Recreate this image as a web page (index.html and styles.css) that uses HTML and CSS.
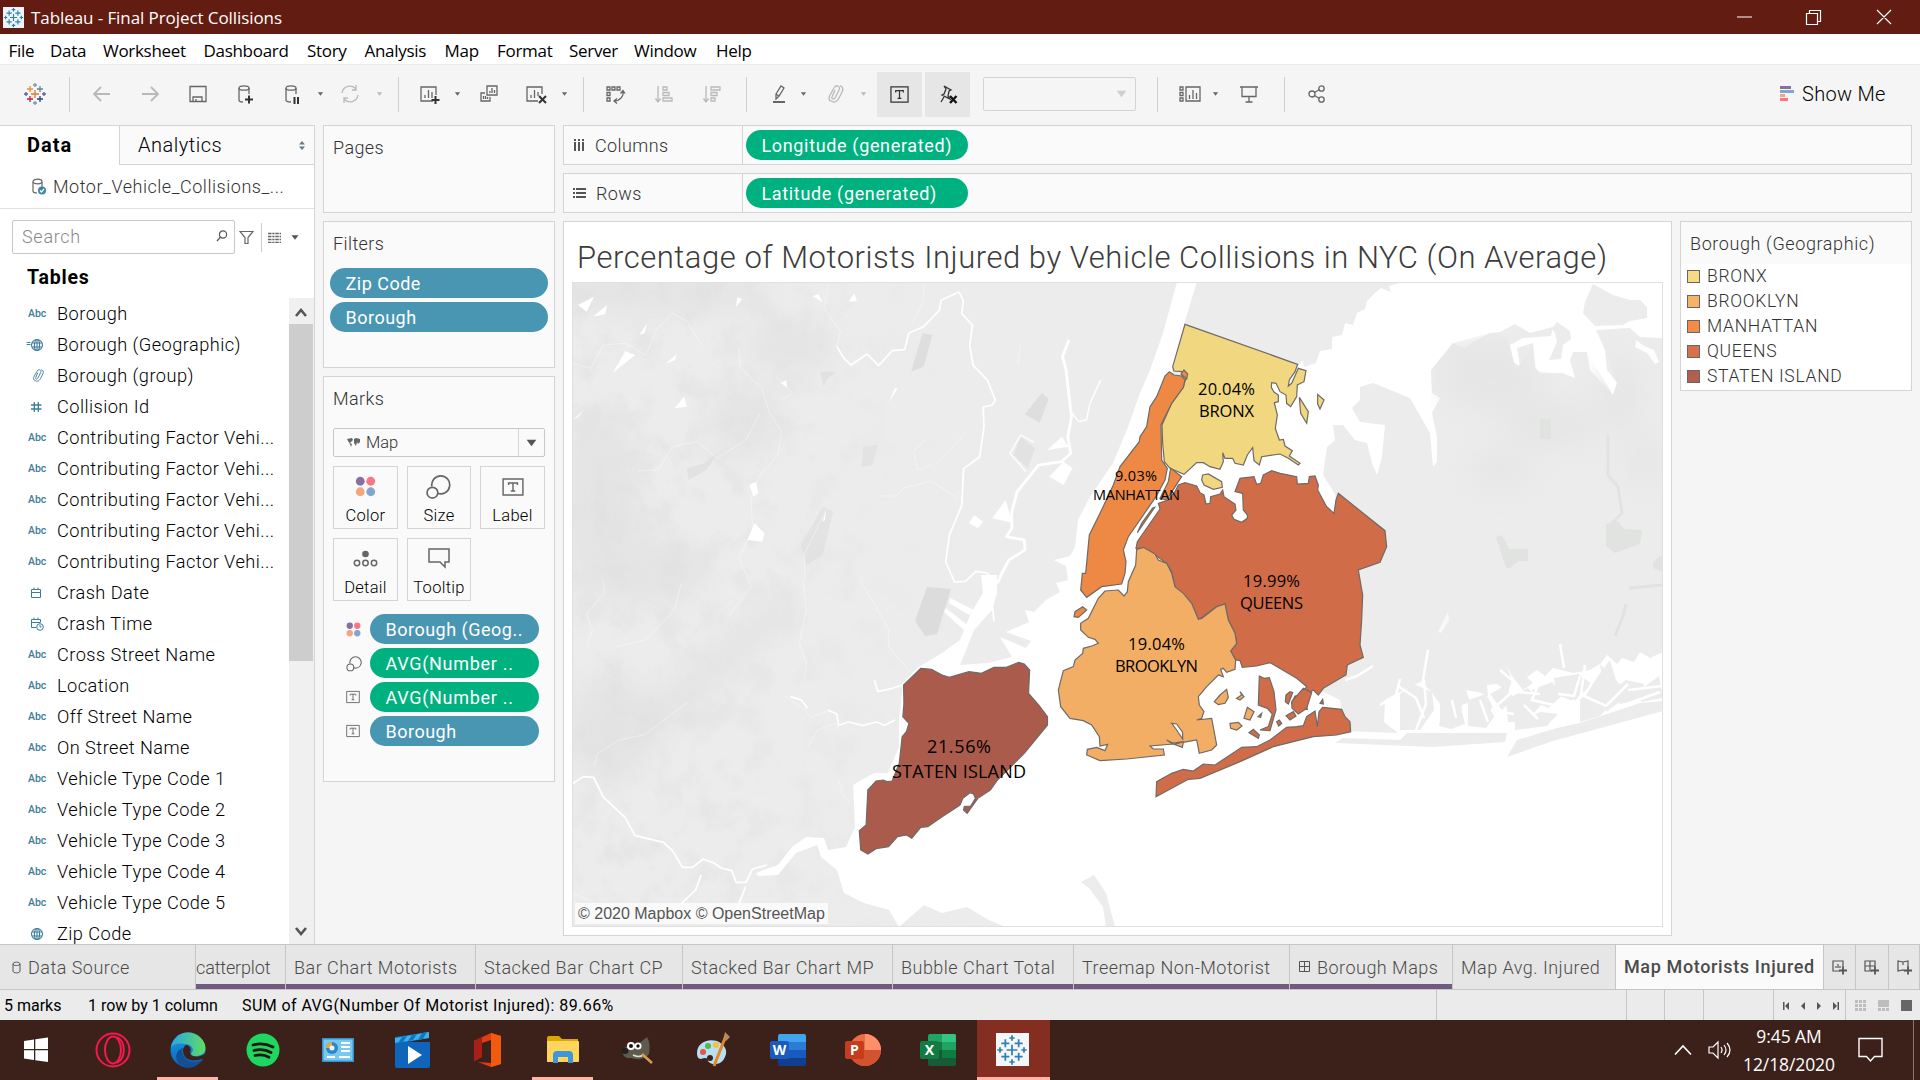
FILE: index.html
```html
<!DOCTYPE html>
<html lang="en">
<head>
<meta charset="utf-8">
<title>Tableau - Final Project Collisions</title>
<link rel="stylesheet" href="styles.css">
</head>
<body>
<svg class="defs" width="0" height="0" aria-hidden="true">
  <defs>
    <symbol id="tableau" viewBox="0 0 24 24"><g fill="none" stroke-width="1.3">
      <path class="t1" d="M12 8v8M8 12h8"/><path class="t2" d="M7 4v6M4 7h6"/><path class="t3" d="M17 4v6M14 7h6"/><path class="t4" d="M7 14v6M4 17h6"/><path class="t5" d="M17 14v6M14 17h6"/><path class="t6" d="M12 1v4M10 3h4M12 19v4M10 21h4"/><path class="t7" d="M3 10v4M1 12h4M21 10v4M19 12h4"/></g></symbol>
    <symbol id="caret" viewBox="0 0 8 6"><path d="M1 1h6L4 5z" fill="currentColor"/></symbol>
    <symbol id="clip" viewBox="0 0 24 24"><path d="M7 19c-3-1-2-4-1-6l4-7c2-4 7-2 5 2l-4 8c-1 2-4 1-3-1l3-7M7 19c3 2 6 1 8-3l3-6c2-4 0-6-2-6" fill="none" stroke="currentColor" stroke-width="1.3"/></symbol>
    <symbol id="tbox" viewBox="0 0 20 20"><path d="M1 2h18v16H1zM6 8V6h8v2M10 6v8M8 14h4" fill="none" stroke="currentColor" stroke-width="1.3"/></symbol>
    <symbol id="bubbles" viewBox="0 0 24 24"><g fill="none" stroke="currentColor" stroke-width="1.5"><path d="M7 12A8 8 0 1 1 12 18"/><circle cx="7.5" cy="17.500" r="4.800"/></g></symbol>
    <symbol id="dots" viewBox="0 0 20 20"><circle cx="5" cy="5" r="4.200" fill="#87709d"/><circle cx="15" cy="5" r="4.200" fill="#fb7582"/><circle cx="5" cy="15" r="4.200" fill="#f3a67e"/><circle cx="15" cy="15" r="4.200" fill="#81a5cf"/></symbol>
    <symbol id="globe" viewBox="0 0 14 14"><g fill="none" stroke="currentColor" stroke-width="1.100"><circle cx="7" cy="7" r="5.500"/><ellipse cx="7" cy="7" rx="2.600" ry="5.500"/><path d="M2 5h10M2 9h10M7 1.500v11"/></g></symbol>
  </defs>
</svg>
<div class="app">
  <header class="titlebar">
    <span class="appicon"><svg width="21" height="21"><use href="#tableau"/></svg></span>
    <span class="wintitle">Tableau - Final Project Collisions</span>
    <svg class="winctl" width="160" height="20" viewBox="0 0 160 20" fill="none" stroke="#fff" stroke-width="1.200"><path d="M1 10h15M70.500 6.500h11v11h-11zM73.500 6V3.500h11v11H82M141 3l14 14M155 3l-14 14"/></svg>
  </header>
  <nav class="menubar"><span>File</span><span>Data</span><span>Worksheet</span><span>Dashboard</span><span>Story</span><span>Analysis</span><span>Map</span><span>Format</span><span>Server</span><span>Window</span><span>Help</span></nav>

  <div class="toolbar">
    <svg class="ic color"><use href="#tableau"/></svg><i class="sep"></i>
    <svg class="ic dim" viewBox="0 0 24 24"><path d="M20 12H4M11 5l-7 7 7 7" stroke-width="1.800"/></svg>
    <svg class="ic dim" viewBox="0 0 24 24"><path d="M4 12h16M13 5l7 7-7 7" stroke-width="1.800"/></svg>
    <svg class="ic" viewBox="0 0 24 24"><path d="M4 4.500h16v15H4zM7 19v-4h9v4M10 19v-2"/></svg>
    <svg class="ic" viewBox="0 0 24 24"><ellipse cx="10" cy="6" rx="5" ry="2.200"/><path d="M5 6v12c0 1.500 2 2 4 2M15 6v6"/><path d="M11 17.500h8M15 13.500v8" stroke="#333" stroke-width="2"/></svg>
    <svg class="ic" viewBox="0 0 24 24"><ellipse cx="11" cy="6" rx="5" ry="2.200"/><path d="M6 6v12c0 1.500 2 2 5 2M16 6v6"/><path d="M14.500 15v7M18 15v7" stroke="#333" stroke-width="2"/></svg>
    <svg class="car"><use href="#caret"/></svg>
    <svg class="ic dim" viewBox="0 0 24 24"><path d="M4 11a8 8 0 0 1 14-4M20 13a8 8 0 0 1-14 4M18 3v5h-4M6 21v-5h4"/></svg>
    <svg class="car dim"><use href="#caret"/></svg><i class="sep"></i>
    <svg class="ic" viewBox="0 0 24 24"><path d="M16 19H4V5h15v8M8 16v-3M11.500 16V8M15 16v-6"/><path d="M14.500 18h8M18.500 14v8" stroke="#333" stroke-width="2"/></svg>
    <svg class="car"><use href="#caret"/></svg>
    <svg class="ic" viewBox="0 0 24 24"><path d="M10 4h10v9H10zM13 11V9M15 11V6M17.500 11V8M8 11H4v8h9v-4M6.500 17v-3M8.500 17v-3M10.500 17v-2"/></svg>
    <svg class="ic" viewBox="0 0 24 24"><path d="M14 19H3V5h15v7M7 16v-3M10.500 16V8M14 14v-4"/><path d="M15 14l7 7M22 14l-7 7" stroke="#333" stroke-width="2"/></svg>
    <svg class="car"><use href="#caret"/></svg><i class="sep"></i>
    <svg class="ic" viewBox="0 0 24 24"><path d="M4 5h3v3H4zM9 5h3v3H9zM14 5h3v3h-3zM4 10.500h3v3H4zM4 16h3v3H4zM20 9c1 5-3 10-9 10M17.500 11.500l2.500-3 2 3M14 16.500L11 19l3 2.500"/></svg>
    <svg class="ic dim" viewBox="0 0 24 24"><path d="M6 4v15M3.500 16.500L6 20l2.500-3.500M11 5h4v3h-4zM11 10.500h6v3h-6zM11 16h9v3h-9z"/></svg>
    <svg class="ic dim" viewBox="0 0 24 24"><path d="M6 4v15M3.500 16.500L6 20l2.500-3.500M11 5h9v3h-9zM11 10.500h6v3h-6zM11 16h4v3h-4z"/></svg><i class="sep"></i>
    <svg class="ic" viewBox="0 0 24 24"><path d="M9 12l5-8 3 2-5 8-3 3zM9 12l3 2"/><path d="M6 20h12" stroke-width="2"/></svg>
    <svg class="car"><use href="#caret"/></svg>
    <svg class="ic dim"><use href="#clip"/></svg>
    <svg class="car dim"><use href="#caret"/></svg>
    <span class="tog"><svg width="19" height="19"><use href="#tbox"/></svg></span>
    <span class="tog"><svg class="ic" viewBox="0 0 24 24"><path d="M8 4l7 4-2 1-1 5 2 3-8-4 2-1 2-5zM8 15l-3 5"/><path d="M14 14l6.500 7M20.500 14L14 21" stroke="#111" stroke-width="2.300"/></svg></span>
    <span class="combo"><svg width="13" height="10" viewBox="0 0 8 6"><use href="#caret"/></svg></span><i class="sep"></i>
    <svg class="ic" viewBox="0 0 24 24"><path d="M2 5h3v3H2zM2 10.500h3v3H2zM2 16h3v3H2zM8 5h14v14H8zM11.500 17v-4M15 17V8M18.500 17v-6"/></svg>
    <svg class="car"><use href="#caret"/></svg>
    <svg class="ic" viewBox="0 0 24 24"><path d="M3 5h18M5 5v9.500h14V5M12 15v5M8.500 20h7"/></svg><i class="sep"></i>
    <svg class="ic" viewBox="0 0 24 24"><circle cx="7" cy="12" r="3"/><circle cx="16.500" cy="6.500" r="2.700"/><circle cx="16.500" cy="17.500" r="2.700"/><path d="M9.500 10.500l5-3M9.500 13.500l5 3"/></svg>
    <span class="showme"><svg width="15" height="16"><path d="M0 0h11v3H0z" fill="#87709d"/><path d="M0 4h14v3H0z" fill="#81a5cf"/><path d="M0 8h5v3H0z" fill="#f3a67e"/><path d="M0 12h8v3H0z" fill="#fb7582"/></svg><b>Show Me</b></span>
  </div>

  <main class="work">
    <aside class="side">
      <div class="tabs2"><span class="on">Data</span><span class="off">Analytics<svg width="6" height="9"><path d="M0 3.500L3 0l3 3.500zM0 5.500L3 9l3-3.500z" fill="#687a85"/></svg></span></div>
      <div class="source"><svg width="16" height="18" viewBox="0 0 16 18" fill="none" stroke="#666" stroke-width="1.200"><ellipse cx="6.500" cy="3.500" rx="4.500" ry="2.300"/><path d="M2 4v9c0 2 2 2 4 2M11 4v5"/><circle cx="11" cy="12.500" r="4" fill="#3d87a3" stroke="none"/><path d="M9 12.500l1.500 1.500 2.500-3" stroke="#fff"/></svg><span>Motor_Vehicle_Collisions_...</span></div>
      <div class="find">
        <div class="searchbox"><span>Search</span><svg width="12" height="12" fill="none" stroke="#555" stroke-width="1.200"><circle cx="7" cy="4.500" r="3.600"/><path d="M4.500 7L1 11"/></svg></div>
        <svg class="funnel" width="15" height="15" fill="none" stroke="#666" stroke-width="1.200"><path d="M1 1.500h13L9 7.500v6H6v-6z"/></svg>
        <svg class="view" width="13" height="11" stroke="#666" stroke-width="1.300"><path d="M0 1.500h13M0 4.500h13M0 7.500h13M0 10.300h13" stroke-dasharray="3.500 .8 2.200 .8"/></svg>
        <svg width="10" height="7" viewBox="0 0 8 6" color="#555"><use href="#caret"/></svg>
      </div>
      <h2>Tables</h2>
      <div class="listwrap">
        <ul class="fields">
          <li><em>Abc</em>Borough</li>
          <li><em class="g"><small>=</small><svg width="14" height="14"><use href="#globe"/></svg></em>Borough (Geographic)</li>
          <li><em><svg width="17" height="17"><use href="#clip"/></svg></em>Borough (group)</li>
          <li><em><svg width="12" height="12" stroke="currentColor" stroke-width="1.300"><path d="M4.300 1v10M8.300 1v10M1 4h10.500M1 8h10.500"/></svg></em>Collision Id</li>
          <li><em>Abc</em>Contributing Factor Vehi...</li>
          <li><em>Abc</em>Contributing Factor Vehi...</li>
          <li><em>Abc</em>Contributing Factor Vehi...</li>
          <li><em>Abc</em>Contributing Factor Vehi...</li>
          <li><em>Abc</em>Contributing Factor Vehi...</li>
          <li><em><svg width="12" height="12" fill="none" stroke="currentColor"><path d="M1.500 2.500h9v8h-9zM1.500 5.500h9M4 .5v2M8 .5v2"/></svg></em>Crash Date</li>
          <li><em><svg width="14" height="14" fill="none" stroke="currentColor"><path d="M6 10.500H1.500v-8h9V5M1.500 5.500h9M4 .5v2M8 .5v2"/><circle cx="10" cy="10" r="3.300"/><path d="M10 8v2h1.500"/></svg></em>Crash Time</li>
          <li><em>Abc</em>Cross Street Name</li>
          <li><em>Abc</em>Location</li>
          <li><em>Abc</em>Off Street Name</li>
          <li><em>Abc</em>On Street Name</li>
          <li><em>Abc</em>Vehicle Type Code 1</li>
          <li><em>Abc</em>Vehicle Type Code 2</li>
          <li><em>Abc</em>Vehicle Type Code 3</li>
          <li><em>Abc</em>Vehicle Type Code 4</li>
          <li><em>Abc</em>Vehicle Type Code 5</li>
          <li><em><svg width="14" height="14"><use href="#globe"/></svg></em>Zip Code</li>
        </ul>
        <div class="scroll"><svg width="12" height="26" fill="none" stroke="#555" stroke-width="2.600"><path d="M1 18l5-6 5 6"/></svg><div class="thumb"></div><svg width="12" height="26" fill="none" stroke="#555" stroke-width="2.600"><path d="M1 10l5 6 5-6"/></svg></div>
      </div>
    </aside>

    <section class="cards">
      <div class="card pages"><h3>Pages</h3></div>
      <div class="card filters"><h3>Filters</h3><div class="pill blue">Zip Code</div><div class="pill blue">Borough</div></div>
      <div class="card marks"><h3>Marks</h3>
        <div class="marktype"><svg width="13" height="10"><path d="M0 1l5-1 1 2-2 2-1 1 2 1-1 3-1-3-2-3zM7 1l2-1 4 1v3l-2 2-1-2-1 4-2-3z" fill="#666"/></svg><span>Map</span><i><svg width="13" height="10" viewBox="0 0 8 6"><use href="#caret"/></svg></i></div>
        <div class="btns">
          <span><svg width="21" height="21"><use href="#dots"/></svg>Color</span>
          <span><svg class="big" width="27" height="27"><use href="#bubbles"/></svg>Size</span>
          <span><svg width="22" height="20" viewBox="0 0 20 20" preserveAspectRatio="none"><use href="#tbox"/></svg>Label</span>
          <span><svg width="25" height="20" fill="none" stroke="#666" stroke-width="1.500"><circle cx="12.500" cy="5" r="3.300" fill="#666" stroke="none"/><circle cx="4" cy="14" r="2.700"/><circle cx="12.500" cy="14" r="2.700"/><circle cx="21" cy="14" r="2.700"/></svg>Detail</span>
          <span><svg width="22" height="21" fill="none" stroke="#666" stroke-width="1.500"><path d="M1 1h20v13h-4v5l-5-5H1z"/></svg>Tooltip</span>
        </div>
        <div class="markrow"><svg width="15" height="15"><use href="#dots"/></svg><div class="pill blue tight">Borough (Geog..</div></div>
        <div class="markrow"><svg width="17" height="17"><use href="#bubbles"/></svg><div class="pill green wide">AVG(Number ..</div></div>
        <div class="markrow"><svg width="14" height="14"><use href="#tbox"/></svg><div class="pill green wide">AVG(Number ..</div></div>
        <div class="markrow"><svg width="14" height="14"><use href="#tbox"/></svg><div class="pill blue">Borough</div></div>
      </div>
    </section>

    <section class="canvas">
      <div class="shelf"><div class="lab"><svg width="12" height="13" stroke="#555" stroke-width="2"><path d="M2 0v2M2 3v9M6 0v2M6 3v9M10 0v2M10 3v9"/></svg>Columns</div><div class="pill green">Longitude (generated)</div></div>
      <div class="shelf"><div class="lab"><svg width="13" height="12" stroke="#555" stroke-width="2"><path d="M0 2h2M3 2h10M0 6h2M3 6h10M0 10h2M3 10h10"/></svg>Rows</div><div class="pill green">Latitude (generated)</div></div>
      <div class="lower">
        <div class="sheet">
          <h1>Percentage of Motorists Injured by Vehicle Collisions in NYC (On Average)</h1>
          <div class="mapbox">
          <svg class="map" viewBox="572 282 1091 645" width="1091" height="645">
            <defs>
              <filter id="mottle" x="0" y="0" width="1" height="1" color-interpolation-filters="sRGB"><feTurbulence type="fractalNoise" baseFrequency=".035 .03" numOctaves="4" seed="8"/><feColorMatrix values="0 0 0 0 .87  0 0 0 0 .87  0 0 0 0 .87  4 0 0 0 -1.900"/></filter>
              <filter id="soft" x="-.3" y="-.3" width="1.600" height="1.600" color-interpolation-filters="sRGB"><feGaussianBlur stdDeviation="14"/></filter>
              <linearGradient id="fadeR"><stop offset=".3" stop-color="#fff"/><stop offset=".8" stop-color="#000"/></linearGradient>
              <mask id="west"><rect x="572" y="282" width="500" height="645" fill="url(#fadeR)"/></mask>
              <clipPath id="li"><path d="M1431 370L1453 343 1490 333 1508 338 1516 370 1533 345 1536 370 1575 378 1587 352 1613 395 1617 383 1605 350 1600 335 1663 338V540H1431z"/></clipPath>
            </defs>
            <rect x="572" y="282" width="1091" height="645" fill="#ececec"/>
            <g fill="#e2e2e2" filter="url(#soft)" opacity=".8"><ellipse cx="650" cy="292" rx="120" ry="22"/><ellipse cx="600" cy="500" rx="40" ry="90"/><ellipse cx="640" cy="570" rx="70" ry="35"/><ellipse cx="790" cy="345" rx="45" ry="25"/><ellipse cx="745" cy="420" rx="35" ry="35"/><ellipse cx="610" cy="730" rx="45" ry="55"/><path d="M600 740L780 590 800 610 640 760z"/></g>
            <rect x="572" y="282" width="500" height="645" filter="url(#mottle)" mask="url(#west)" opacity=".36"/>
            <g transform="translate(560 220) scale(.35714 .33333)" fill="#dedede">
              <path d="M1350 518l18 20-25 70-42-25zM1015 340l28 5-25 95-35 15z"/><path d="M735 860l30 15-30 130-45 30-15-60z" opacity=".6"/><path d="M728 455h47l-25 20-12 25zM355 745l50-15 35-30-30 50-50 30zM1290 650l40 35-20 60-40-40z" opacity=".7"/><path d="M850 680l40-5-15 60-30 5z" opacity=".6"/>
            </g>
            <path d="M927 587l24 2-14 45-12 2-10-15z" fill="#dcdcdc"/>
            <g transform="translate(560 220) scale(.35714 .33333)" fill="#fff">
              <path d="M50 255l45-25-20 45zM92 290l40-35-5 28zM222 345l22-35-8 30zM148 458l35-65 28 12zM295 432l32-30-5 18zM320 565l28-35 8 30zM36 600l30-30-15 20zM492 262l5-30 13 5zM708 228l28 20-12-25zM808 245l16-25 7 23zM618 490l15-10 3 22zM920 548l18-45 7 3zM530 795l18-10 8 35-14 10zM525 960l20-50 28 30-6 25zM735 905l10-35-3 30zM1210 895l38-55 18 68zM1145 910l15-25 25 20-15 20zM1370 770l40-45 25 20-25 50zM1365 690l40-40 20 30z"/>
              <g fill="none" stroke="#fff" stroke-linejoin="round">
                <path stroke-width="5" d="M775 380l20 35 20 20 45-33 32 35 38-45 35-3 12-50 40-18 45-50 5-30 50-25 12 25-4 40 30 35-8 60 10 60 40 45 22 60-10 15-24 5 2 60-12 90-45 35-5 110-35 90-10 80 25 60 30-2 30-30 30 5 25 25-10 60 5 60"/>
                <path stroke-width="8" d="M1425 360l-18 50 10 40 15 140-10 60 8 50-25 25-65 10-60 80-15 60 0 50-15 25 50 10 2 30-45 30-20 40-10 25-20 18-22 20"/>
                <path stroke-width="4" d="M1430 575l22 30 22-5 10-50 30-70M1305 755l-45-55 30-55 38 22"/>
                <path stroke-width="1.500" opacity=".75" d="M36 430l50 15 35-70 60-5 60 35 30-80 45-45 40 25 40 70M750 190l-10 75 45 70-10 45M1020 190l-5 60-30 60M500 385l5 60 60 60 20 70 35 60-10 70-50 60-25 70 5 100-40 75 35 90-60 85M560 580l-40 80-80 55-55-50-70 15-40 70-58 3M620 540l30-20-45-50M895 828h45l25-25 75-20 70 50M1040 735l-38 15-12-55 30-35M1055 730l80-90M1290 375l-8 60M685 1080v-80l60-130"/>
              </g>
            </g>
            <g transform="translate(560 580) scale(.35714 .33333)" fill="none" stroke="#fff" stroke-linejoin="round">
              <path stroke-width="5" d="M36 610l30-20 28 2 28 60 60 60 28 55 80 20 25 25 28 50 28 0 30-25 30 12 20 15 30 8 12 35 28 0 18-40 40-12"/>
              <path stroke-width="5" d="M645 350l30 10 18 25M750 390l25 12 5 34 28-10 40 10 40-10 20 10 30-16M880 300l10 35 40-10 30-10M395 885l-15 45-40 40M520 920l-30 80"/>
              <path stroke-width="1.500" opacity=".75" d="M95 560l10-40 60-40 70-15 125-100M120 0l5 40-50 60 15 50-15 50M340 10l-20 80-80 90-80 20M680 0l10 90-20 100 20 60-5 50M840 0l50 90 30 60v50l60 75M695 500l25-50 50-20 10 20M630 348l60 45 10 20 50-20M780 600l10 40 30 40M0 925l90 40 30 40"/>
            </g>
            <g fill="#fff">
              <path d="M1177 282L1172 300 1163 333 1150 370 1140 393 1128 427 1113 463 1090 497 1078 520 1075 547 1070 556 1054 560 1066 566 1068 580 1056 583 1060 592 1046 600 1034 612 1025 610 1029 622 1006 632 1031 641 1026 648 1000 637 1012 657 988 663 960 665 974 630 992 610 997 593V575H981L983 593 971 613 960 640 942 653 917 668 903 683 899 720V747L888 773H874L853 785 855 827 846 847 828 850 824 838 806 837 792 847 778 865 756 873 758 876 778 875 796 853 817 845 821 857 837 870 844 893 864 903 889 910 899 927 924 905 942 913 967 907 989 920 1006 927H1663V282H1400L1363 292 1355 308 1342 320 1325 335 1313 350 1298 365 1173 400 1172 370 1184 325 1197 282z"/>
              <path d="M950 598l24 12-5 5-20-12M944 612l22 20 0-8-20-16"/>
            </g>
            <g fill="#ececec">
              <path d="M1173 369L1184 325 1197 282H1400L1363 292 1355 308 1342 320 1325 335 1313 350 1298 365z"/>
              <path d="M1363 282l40 0-14 4 2 6-10-4-6 5-8 8-2 8-8 4-4 12-8-2-3 12-10 2v12l-12 2-4 12-12 4-6-40 40-20z"/>
              <path d="M1335 494L1323 475 1327 447 1335 440 1333 425 1343 425 1355 440 1367 443 1372 463 1377 475 1382 457 1385 425 1360 422 1352 408 1360 400V387L1373 383 1410 398 1430 433 1433 467 1437 462V437L1432 413 1440 398 1432 393 1431 370 1453 343 1465 348 1473 342 1490 333 1500 332 1515 324 1530 333 1553 327 1551 336 1523 338 1510 345 1513 362 1520 366 1517 348 1533 343 1535 367 1540 373 1562 373 1575 378 1570 360 1573 352H1587L1590 370 1613 395 1617 383 1607 370 1605 350 1596 330 1630 328 1640 337 1663 338V652L1650 658 1640 652 1634 662 1622 658 1617 664 1607 655 1600 664 1590 670 1573 673 1553 668 1545 676 1537 670 1527 677 1533 683 1523 690 1512 676 1506 664 1512 680 1508 692 1497 684 1487 685 1488 696 1478 692 1466 690 1470 702 1462 705 1460 722 1440 722 1440 704 1430 690 1420 682 1400 692 1385 700 1384 722 1398 733 1345 731 1340 700 1320 690 1346 666 1360 660z"/>
              <path d="M1552 328l5-6 13 9 1 8-8 6-2 14-12 1 8-18-2-9zM1595 326L1583 313 1585 302 1593 284 1613 295 1630 300 1640 300 1647 307V318L1630 321 1623 325z"/>
              <path d="M1335 743l8-5 57 2 7-7h100l-2 9-72 5zM1507 757l10-17 40-12 23-5 60-20 23-2v10l-110 30z"/>
              <path d="M1081 882l13-7 12 18 9 34h-9l-3-20-14-19z"/>
            </g>
            <path d="M1636 340l8 6 10 4 5 12-4 2-8-11-12-6z" fill="#fff"/>
            <g clip-path="url(#li)"><g fill="#e6e6e6" filter="url(#soft)"><ellipse cx="1490" cy="380" rx="50" ry="30"/><ellipse cx="1550" cy="425" rx="50" ry="24"/><ellipse cx="1500" cy="470" rx="30" ry="18"/><ellipse cx="1620" cy="395" rx="22" ry="40"/><ellipse cx="1480" cy="350" rx="50" ry="12"/><ellipse cx="1645" cy="460" rx="18" ry="26"/></g></g>
            <path d="M1496 537l6-2 7 14h19v12h-9l-9 7-4 0zM1606 524l12-3 6 8 18 1-2 14-25 9-9-7zM1653 562l10-8v18l-10-4zM1540 419h11v20h-11z" fill="#e1e3e1"/>
            <path d="M1615 636l8-20 3-12M1629 588l34-3M1608 435v40l10 12 4 26-14 14" fill="none" stroke="#e1e3e1" stroke-width="3"/>
            <!-- salt-marsh islands behind the barrier beach -->
            <g fill="#ececec" stroke="none">
              <path d="M1400 694l14-10 18 8 2 18-14 20-20 0zM1443 708l18 0 4 16-14 5-12-3zM1468 700l18-6 10 20-10 14-18-2zM1490 694l14-8 10 12-12 12zM1506 700l22-12 14 16-16 18-18 0zM1532 690l20-8 10 14-14 12-12-6zM1554 678l24-4 14 10-18 18-18-8zM1580 700l30-40 10 34-20 22-20 6zM1612 690l14-10 18 4-2 16-22 4zM1643 688l16-12 4 22-22 4zM1360 712l18-16 4 34h-20zM1515 722l26-10 18 2-12 12-32 4zM1600 664l20 20 16 6-30 22z"/>
            </g>
            <g fill="none" stroke="#fff" stroke-width="2.500">
              <path d="M1345 680l12-4 16-10M1380 705l16-10 4-16M1398 686l18 12 8 20M1424 680l2 24-10 26M1500 670l12 10 6 12 22 2M1512 692l-20 18 12 20M1540 680l-8 20 26 6M1558 694l16 2 6-20M1574 700l-24 24M1585 665l-4 30-20 30M1600 670l-16 26 22 10 22-22M1628 690l34-4M1610 710l50-18M1480 700l8 22M1452 700l4 18M1524 705l14 14M1500 712l14 2M1560 644l4 24M1428 650l-6 36M1568 706l8 16"/>
            </g>
            <path d="M1438 632l10-20 1 8-8 13z" fill="#f8f8f8"/>

            <g class="boro">
              <g transform="translate(1050 300) scale(.33333)">
                <path fill="#f1d780" d="M405 73L743 193 735 215 718 240 715 258 725 250 745 205 768 212 762 245 742 255 740 290 722 320 710 310 708 285 690 275 678 250 665 248 664 262 672 276 685 285V305L673 308 682 345 676 385 688 420 700 418 705 438 727 452 718 468 750 490 745 495 715 475 690 462 635 470 628 495 612 482 608 443 592 465 580 495 555 490 548 475 525 475 518 458 520 485 510 508 480 500 460 488 440 488 402 523 360 505 343 485 338 430 336 375 365 310 400 262 407 235 395 215 372 213 368 200zM458 525L475 522 515 545 517 562 490 568 462 555 455 540zM748 292L775 335 770 370 752 340zM803 283L822 300 810 327 803 312z"/>
                <path fill="#ee8945" d="M358 215L372 225 395 228 405 240 400 262 365 310 333 375 335 480 352 505 345 540 318 590 235 710 220 750 228 785 225 820 215 852 155 860 110 892 92 870 97 820H107L118 705 150 640 190 555 210 500 268 425 270 410 290 380 300 320 320 290 345 228zM362 505L395 530 385 545 368 572 350 600 330 595 355 545zM314 622L262 698 275 670 308 624zM393 222L402 210 413 222 410 237z"/>
                <path fill="#d16c49" d="M258 745L262 725 330 627 325 610 355 600 375 575 385 555 405 548 440 558 450 578 462 585 468 612 480 610 482 590 510 582 518 570 522 590 555 612 558 630 545 645 552 658 575 667 592 655V645L580 630 578 580 555 575 570 535 612 530 620 553 632 550 640 525 665 512 690 520 740 530 742 552 775 550 778 530 795 528 805 555 803 570 830 620 852 640 858 600 865 580 1005 692 1010 740 990 787 925 810 938 885 935 960 930 1035 940 1072 892 1095 888 1125 820 1165 805 1185 790 1170 775 1180 766 1206 772 1228 750 1228 725 1210 735 1188 752 1186 770 1160 740 1135 660 1088 620 1098 577 1102 570 1082 557 1080 542 1053 560 1030 555 1000 535 960 525 912 500 920 455 953 445 958 425 910 375 860 365 815 350 790 315 765 285 745z"/>
              </g>
              <g transform="translate(1040 540) scale(.33333)">
                <path fill="#f3ae65" d="M290 28L310 22 345 42 355 60 380 70 395 100 405 140 430 160 455 190 475 238 485 235 530 200 555 192 565 240 585 280 590 310 572 333 587 360 585 388 560 397 550 385 542 388 550 410 535 405 500 440 475 470 478 495 492 515 485 535 470 540 515 535 530 615 515 630 478 640 470 600 430 607 427 622 400 612 330 618 340 627 370 627 373 645 260 657 180 662 140 645 142 628 170 622 195 632 203 613 180 618 178 590 155 555 130 542 90 535 62 500 55 450 70 392 100 380 105 360 128 340 130 325 155 318 175 310 165 298 145 292 122 270V250L145 235 175 175 195 153 235 150 252 168 262 155 265 125 287 75zM523 485L540 465 560 448 565 472 555 490 535 494zM590 475L605 465 600 455 612 470 600 480zM622 502L642 515 630 540 612 535zM570 550L595 547 606 558 590 570 572 565z"/>
                <path fill="#ee8945" d="M102 230L105 215 128 200 140 210 115 232z"/>
                <path fill="#d16c49" d="M348 770L350 725 395 700 430 688 460 693 490 672 525 675 605 622 650 620 690 600 740 562 770 560 790 557 800 530 825 513 832 560 837 515 848 502 905 508 915 530 930 545 932 575 890 585 820 590 700 620 600 665 480 715 445 718zM658 408L672 415 688 413 702 455 708 510 690 572 660 570 685 560 697 522 682 505 655 495zM738 465L750 455 758 458 745 492 736 485zM738 527L760 515 768 528 750 540zM840 490L848 478 850 492zM654 530L665 520 662 532zM710 545L718 540 725 550 716 558zM627 578L640 568 658 585 655 595zM755 485L790 445 815 458 800 505 775 522 756 505z"/>
                <path fill="#fff" d="M395 550l15 2 18 25 0 20-20-30zM380 600l15 10 35-5-25 8z"/>
              </g>
              <path transform="translate(560 580) scale(.35714 .33333)" fill="#ab5b4c" d="M1010 265L1040 268 1070 285 1090 292 1145 275 1180 280 1215 262 1250 262 1285 247 1300 252 1315 270 1312 340 1340 375 1365 410V435L1300 520 1225 600 1205 630 1170 655 1140 700 1130 690 1132 680 1150 678 1163 655 1158 642 1148 638 1128 655 1120 675 1070 710 1030 740 1010 742 985 775 970 765 945 770 920 800 885 806 862 822 842 810 838 752 857 735 862 630 885 603 905 600 915 605 930 603 950 550 958 470 970 455 977 430 960 410 963 370 962 315z"/>
            </g>
            <g class="lbl">
              <text x="1198" y="395" textLength="57">20.04%</text><text x="1199" y="417" textLength="55">BRONX</text>
              <text x="1243" y="587" textLength="57">19.99%</text><text x="1240" y="609" textLength="63">QUEENS</text>
              <text x="1128" y="650" textLength="57">19.04%</text><text x="1115" y="672" textLength="83">BROOKLYN</text>
            </g>
            <g class="lbl sm"><text x="1115" y="481" textLength="42">9.03%</text><text x="1093" y="500" textLength="87">MANHATTAN</text></g>
            <g class="lbl lg"><text x="927" y="753" textLength="64">21.56%</text><text x="892" y="778" textLength="134">STATEN ISLAND</text></g>
          </svg>
          <span class="credit">© 2020 Mapbox © OpenStreetMap</span>
          </div>
        </div>
        <div class="legend"><h3>Borough (Geographic)</h3>
          <p><i class="c1"></i>BRONX</p><p><i class="c2"></i>BROOKLYN</p><p><i class="c3"></i>MANHATTAN</p><p><i class="c4"></i>QUEENS</p><p><i class="c5"></i>STATEN ISLAND</p></div>
      </div>
    </section>
  </main>

  <nav class="sheets">
    <span class="ds"><svg width="9" height="13" fill="none" stroke="#555"><path d="M1 3v7c0 2.500 7 2.500 7 0V3c0-2.500-7-2.500-7 0c0 2 7 2 7 0"/></svg>Data Source</span>
    <span class="p cut">catterplot</span><span class="p">Bar Chart Motorists</span><span class="p">Stacked Bar Chart CP</span><span class="p">Stacked Bar Chart MP</span><span class="p">Bubble Chart Total</span><span class="p">Treemap Non-Motorist</span>
    <span class="p"><svg width="12" height="12" fill="none" stroke="#555"><path d="M.5 .5h10v10H.5zM.5 5.500h10M5.500 .5v10"/></svg>Borough Maps</span><span>Map Avg. Injured</span><span class="cur">Map Motorists Injured</span>
    <span class="add"><svg width="18" height="16" fill="none" stroke="#555" stroke-width="1.200"><path d="M9 12H2V2h10v6M5 9V7M7 9V5M9 9V7"/><path d="M8 11.500h8M12 7.500v8" stroke-width="1.800"/></svg></span>
    <span class="add"><svg width="18" height="16" fill="none" stroke="#555" stroke-width="1.200"><path d="M9 12H2V2h10v6M2 7h10M7 2v10"/><path d="M8 11.500h8M12 7.500v8" stroke-width="1.800"/></svg></span>
    <span class="add"><svg width="18" height="16" fill="none" stroke="#555" stroke-width="1.200"><path d="M9 12L7 11l-5 1V2l5 1 5-1v6M7 3v3"/><path d="M8 11.500h8M12 7.500v8" stroke-width="1.800"/></svg></span>
  </nav>
  <footer class="status"><span>5 marks</span><span>1 row by 1 column</span><span class="sum">SUM of AVG(Number Of Motorist Injured): 89.66%</span><i></i><i></i><i></i><i></i>
    <i><svg width="56" height="8" fill="#555"><path d="M0 0h1.500v8H0zM6 0v8L2 4zM22 0v8l-4-4zM34 0v8l4-4zM50 0v8l4-4zM54.500 0H56v8h-1.500z"/></svg></i>
    <i><svg width="60" height="12"><g fill="#bdbdbd"><path d="M0 0h3v3H0zM4 0h3v3H4zM8 0h3v3H8zM0 4h3v3H0zM4 4h3v3H4zM8 4h3v3H8zM0 8h3v3H0zM4 8h3v3H4zM8 8h3v3H8zM23 0h11v7H23zM23 8h3v3h-3zM27 8h3v3h-3zM31 8h3v3h-3z"/></g><path d="M46 0h11v11H46z" fill="#666"/></svg></i>
  </footer>

  <footer class="taskbar">
    <span class="t"><svg width="26" height="26" viewBox="0 0 26 26"><path d="M1 4l10-1.500V12H1zM12.300 2.300L25 .5V12H12.300zM1 13.300h10V23L1 21.500zM12.300 13.300H25V25l-12.700-1.800z" fill="#fff"/></svg></span>
    <span class="t"><svg width="36" height="36" fill="none" stroke="#f5194f" stroke-width="2"><circle cx="18" cy="18" r="16.500"/><ellipse cx="18" cy="18" rx="8" ry="13.500"/><path d="M22 5c9 5 9 21 0 26"/></svg></span>
    <span class="t run"><svg width="36" height="36" viewBox="0 0 36 36"><defs><linearGradient id="e1"><stop offset="0" stop-color="#28a8e8"/><stop offset="1" stop-color="#61dc5f"/></linearGradient><linearGradient id="e2" x2="0" y2="1"><stop offset="0" stop-color="#1b9de2"/><stop offset="1" stop-color="#0a63bf"/></linearGradient></defs><circle cx="18" cy="18" r="17.500" fill="url(#e2)"/><path d="M13 22c2 8 12 10 20 5-6 9-17 11-24 5-5-6-3-14 4-16-1 2-1 4 0 6z" fill="#134f99"/><path d="M1 16C2 7 9 .5 18 .5S35.500 8 35.500 16c0 6-5 8-10 8-4 0-5-2-4-3 3-3 1-8-5-9C10 11 4 11 1 16z" fill="url(#e1)"/><path d="M20 20c2-4-1-7-4-7-3 2-4 6-2 10 2 5 8 7 18 4l5 1v-9c-3 6-12 7-16 4z" fill="#3c211b"/></svg></span>
    <span class="t"><svg width="34" height="34" viewBox="0 0 34 34"><circle cx="17" cy="17" r="16.500" fill="#1ed760"/><path d="M7 12c7-2 14-1 20 2M8 17.500c6-1.700 12-1 17 2M9 22.500c5-1.200 10-.7 14 1.800" fill="none" stroke="#241512" stroke-width="2.800" stroke-linecap="round"/></svg></span>
    <span class="t"><svg width="32" height="24" viewBox="0 0 32 24"><path d="M0 0h32v24H0z" fill="#2f94cf"/><path d="M1.500 1.500h29v21h-29z" fill="#78c8ef"/><circle cx="10" cy="10" r="6" fill="#2f86c4"/><path d="M10 10V4a6 6 0 0 0-6 6z" fill="#e9a83c"/><circle cx="10" cy="10" r="2.500" fill="#e8f7ff"/><path d="M19 5h9M19 9h9M19 13h9M5 19h8M17 19h11" stroke="#fff" stroke-width="2"/></svg></span>
    <span class="t"><svg width="38" height="36" viewBox="0 0 38 36"><path d="M1 5l34-5v6L14 10h22v24q0 2-2 2H3q-2 0-2-2z" fill="#0e65b9"/><path d="M1 6L35 0v6L1 11z" fill="#35b4f1"/><path d="M8 5l5-1-4 6-5 1zM18 3l5-1-4 6-5 1zM28 1l5-1-4 7-5 1z" fill="#1275bb"/><path d="M14 14l14 9-14 9z" fill="#fff"/></svg></span>
    <span class="t"><svg width="30" height="34" viewBox="0 0 30 34"><path d="M1 8L18 0l10 3v28l-10 3L5 29l13 1V7L9 10v14l-8 4z" fill="#e33c12"/><path d="M18 0l10 3v28l-10 3z" fill="#f25a0f"/><path d="M1 8l8-4v20l-8 4z" fill="#a91f16"/></svg></span>
    <span class="t run"><svg width="34" height="28" viewBox="0 0 34 28"><path d="M1 2q0-2 2-2h10l3 3h16v6H1z" fill="#e0a500"/><path d="M1 5h31q1 0 1 1v19q0 1-1 1H1z" fill="#ffd65c"/><path d="M7 27v-8q0-4 4-4h12q4 0 4 4v8h-5v-6H12v6z" fill="#3d97dd"/></svg></span>
    <span class="t"><svg width="36" height="30" viewBox="0 0 36 30"><path d="M3 16c2-5 6-7 14-6l10-8c3 5 3 12 2 17-4 6-13 6-18 4-6 1-9-3-8-7z" fill="#5f5a4e"/><circle cx="11" cy="11" r="4" fill="#fff"/><circle cx="18" cy="11" r="3.500" fill="#fff"/><circle cx="11" cy="11" r="2" fill="#111"/><circle cx="18" cy="11" r="1.700" fill="#111"/><ellipse cx="5" cy="16" rx="3.500" ry="3" fill="#222"/><path d="M13 20q6 3 10 0" stroke="#ddd" stroke-width="1.600" fill="none"/><path d="M22 19l10 9" stroke="#d69b52" stroke-width="2.600" fill="none"/></svg></span>
    <span class="t"><svg width="36" height="36" viewBox="0 0 36 36"><path d="M2 21C2 11 12 6 22 9c8 4 12 10 7 18-4 7-14 6-16 2 0-4-4-3-7-2-3 0-4-3-4-6z" fill="#b9dff2"/><circle cx="8" cy="20" r="3" fill="#e35545"/><circle cx="13" cy="14" r="3" fill="#53b94e"/><circle cx="21" cy="13" r="3" fill="#f3c33c"/><circle cx="15" cy="26" r="3" fill="#3b211b"/><path d="M30 6L19 34" stroke="#e4872b" stroke-width="3"/><path d="M28 8l2-8 5 5-4 4z" fill="#b8895b"/></svg></span>
    <span class="t"><svg width="36" height="32" viewBox="0 0 36 32"><path d="M9 0h25q2 0 2 2v6H8V2z" fill="#41a5ee"/><path d="M8 8h28v8H8z" fill="#2b7cd3"/><path d="M8 16h28v8H8z" fill="#185abd"/><path d="M8 24h28v6q0 2-2 2H10q-2 0-2-2z" fill="#103f91"/><rect y="7" width="19" height="18" rx="2" fill="#1b5bbe"/><text x="9.500" y="21" class="let">W</text></svg></span>
    <span class="t"><svg width="36" height="32" viewBox="0 0 36 32"><circle cx="20" cy="16" r="16" fill="#ed6c47"/><path d="M20 0a16 16 0 0 1 16 16H20z" fill="#ff8f6b"/><path d="M4 16h32a16 16 0 0 1-32 0z" fill="#d35230"/><rect y="7" width="19" height="18" rx="2" fill="#c43e1c"/><text x="9.500" y="21" class="let">P</text></svg></span>
    <span class="t"><svg width="36" height="32" viewBox="0 0 36 32"><path d="M9 0h25q2 0 2 2v6H8V2z" fill="#21a366"/><path d="M22 0h12q2 0 2 2v6H22z" fill="#33c481"/><path d="M8 8h28v8H8z" fill="#107c41"/><path d="M22 8h14v8H22z" fill="#21a366"/><path d="M8 16h28v14q0 2-2 2H10q-2 0-2-2z" fill="#185c37"/><path d="M22 16h14v8H22z" fill="#107c41"/><rect y="7" width="19" height="18" rx="2" fill="#107c41"/><text x="9.500" y="21" class="let">X</text></svg></span>
    <span class="t live"><span class="tile"><svg width="32" height="32"><use href="#tableau"/></svg></span></span>
    <div class="tray">
      <svg width="18" height="12" fill="none" stroke="#fff" stroke-width="1.600"><path d="M1 10.500L9 2l8 8.500"/></svg>
      <svg class="spk" width="24" height="20" fill="none" stroke="#fff" stroke-width="1.200"><path d="M1 7h4l5-5v16l-5-5H1zM13 7q2 3 0 6M16 5q4 5 0 10M19 3q6 7 0 14"/></svg>
      <div class="clock"><span>9:45 AM</span><span>12/18/2020</span></div>
      <svg class="note" width="26" height="26" fill="none" stroke="#fff" stroke-width="1.400"><path d="M1 1.500h23v18h-7.500L12.500 24 8.500 19.500H1z"/></svg>
      <i class="peek"></i>
    </div>
  </footer>
</div>
</body>
</html>
```
FILE: styles.css
```css
* { box-sizing: border-box; }
body { margin: 0; width: 1920px; height: 1080px; overflow: hidden; background: #f5f5f5; font-family: Roboto, "Liberation Sans", sans-serif; font-weight: 300; color: #000; }
h1, h2, h3, p, ul { margin: 0; padding: 0; font-weight: inherit; }
i, em { font-style: normal; }
svg { display: block; flex: none; }
.defs { position: absolute; }
.app { display: flex; flex-direction: column; height: 1080px; white-space: nowrap; }

/* colours of the small crosses in the logo; .color turns on the full palette */
.t1 { stroke: var(--t1, #2f7fb5); }
.t2 { stroke: var(--t2, #2f7fb5); }
.t3 { stroke: var(--t3, #2f7fb5); }
.t4 { stroke: var(--t4, #2f7fb5); }
.t5 { stroke: var(--t5, #2f7fb5); }
.t6 { stroke: var(--t6, #2f7fb5); }
.t7 { stroke: var(--t7, #2f7fb5); }
.color { --t1: #e8762c; --t2: #eb9129; --t3: #59879b; --t4: #c72035; --t5: #1f447e; --t6: #7b99a6; --t7: #5b6591; }

.titlebar { height: 34px; background: #631c11; color: #fff; display: flex; align-items: center; padding-left: 3px; flex: none; }
.appicon { width: 21px; height: 21px; background: #eef4f8; }
.wintitle { font: 400 17px/35px "Open Sans", sans-serif; letter-spacing: -.08px; margin-left: 7px; }
.winctl { margin-left: auto; margin-right: 24px; }

.menubar { height: 30px; background: #fff; padding-left: 8.500px; display: grid; grid-template-columns: 41.500px 53px 100.500px 103.500px 57.500px 80px 52.500px 72px 65px 82px auto; font: 400 17px/33px "Open Sans", sans-serif; letter-spacing: -.3px; flex: none; }

.toolbar { height: 61px; border-top: 1px solid #ececec; padding: 0 0 2px 23px; display: grid; align-items: center; grid-template-columns: 46px 21px 48px 48px 48px 46px 37px 21px 38px 22px 19px 37px 23px 47px 37px 22px 20px 49px 48px 46px 21px 33px 24px 36px 17px 48px 58px 174px 21px 34px 25px 47px 21px 475px auto; flex: none; }
.ic { width: 24px; height: 24px; fill: none; stroke: #666; stroke-width: 1.300; color: #666; }
.ic.dim { stroke: #b9b9b9; color: #b9b9b9; }
.car { width: 7px; height: 6px; color: #666; }
.car.dim { color: #b9b9b9; }
.sep { width: 1px; height: 35px; background: #cfcfcf; }
.tog { width: 45px; height: 45px; background: #e6e6e6; display: flex; align-items: center; justify-content: center; color: #333; }
.tog .ic { stroke: #333; }
.combo { width: 153px; height: 34px; border: 1px solid #d4d4d4; border-radius: 2px; display: flex; align-items: center; justify-content: flex-end; padding-right: 7px; color: #cfcfcf; }
.showme { display: flex; align-items: center; gap: 7px; }
.showme b { font-weight: 300; font-size: 20px; letter-spacing: .3px; }

.work { height: 819px; display: flex; flex: none; }
.side { width: 315px; background: #fff; border: solid #d4d4d4; border-width: 1px 1px 0 0; display: flex; flex-direction: column; }
.tabs2 { display: flex; height: 39px; font-size: 20px; line-height: 38px; flex: none; }
.tabs2 .on { width: 119px; padding-left: 27px; font-weight: 700; letter-spacing: 1px; }
.tabs2 .off { flex: 1; background: #fafafa; border: solid #d4d4d4; border-width: 0 0 1px 1px; padding: 0 9px 0 18px; display: flex; align-items: center; justify-content: space-between; letter-spacing: .5px; }
.source { height: 44px; border-bottom: 1px solid #e0e0e0; display: flex; align-items: center; gap: 6px; padding-left: 31px; font-size: 18px; color: #333; flex: none; letter-spacing: .53px; }
.find { height: 58px; padding: 0 0 2px 12px; display: flex; align-items: center; flex: none; }
.searchbox { width: 223px; height: 34px; border: 1px solid #c8c8c8; border-radius: 2px; padding: 0 6px 2px 9px; display: flex; align-items: center; justify-content: space-between; font-size: 18px; color: #888; letter-spacing: .7px; }
.funnel { margin: 0 7px 0 4px; }
.view { box-sizing: content-box; padding: 9px 9px 9px 6px; border-left: 1px solid #ccc; }
.side h2 { height: 31px; padding-left: 27px; font: 700 19.500px/22px Roboto, sans-serif; letter-spacing: .8px; flex: none; }
.listwrap { flex: 1; display: flex; min-height: 0; overflow: hidden; }
.fields { flex: 1; list-style: none; overflow: hidden; }
.fields li { height: 31px; line-height: 31px; font-size: 18.200px; display: flex; letter-spacing: .45px; }
.fields em { width: 57px; padding-left: 28px; font: 500 10.500px/31px Roboto, sans-serif; color: #3c7d99; display: flex; align-items: center; letter-spacing: 0; }
.fields em svg { margin-left: 2px; }
.fields em.g { padding-left: 26px; }
.fields em.g svg { margin-left: -1px; }
.scroll { width: 25px; background: #f0f0f0; display: flex; flex-direction: column; align-items: center; padding-right: 1px; }
.thumb { width: 100%; height: 337px; background: #cdcdcd; margin-bottom: auto; flex: none; }

.cards { width: 232px; margin-left: 8px; display: flex; flex-direction: column; gap: 8px; flex: none; }
.card { background: #fafafa; border: 1px solid #d4d4d4; color: #333; }
h3 { font-size: 18px; line-height: 22px; color: #333; letter-spacing: .4px; }
.card h3 { padding: 11px 9px 0; }
.pages { height: 88px; }
.filters { height: 147px; }
.marks { height: 406px; }
.pill { height: 30px; line-height: 31px; border-radius: 15px; color: #fff; font-size: 18px; font-weight: 400; padding-left: 15.500px; letter-spacing: .5px; }
.pill.tight { letter-spacing: .5px; }
.pill.wide { letter-spacing: .7px; }
.blue { background: #4996b2; }
.green { background: #00b180; }
.filters .pill { margin: 0 6px 4px; }
.filters h3 { margin-bottom: 13px; }
.marktype { margin: 18px 9px 9px; height: 29px; border: 1px solid #c8c8c8; border-radius: 2px; display: flex; align-items: center; padding-left: 13px; gap: 6px; font-size: 16.500px; }
.marktype i { margin-left: auto; width: 26px; height: 27px; border-left: 1px solid #d4d4d4; display: grid; place-items: center; color: #555; }
.btns { display: grid; grid-template-columns: 65px 64px 65px; gap: 9px; padding-left: 9px; margin-bottom: 13px; }
.btns span { height: 63px; border: 1px solid #d4d4d4; display: grid; grid-template-rows: 39px 20px; place-items: center; font-size: 16.500px; font-weight: 300; letter-spacing: .3px; color: #000; line-height: 20px; }
.btns svg { color: #666; }
.btns .big { margin-left: -3px; }
.markrow { display: grid; grid-template-columns: 46px 169px; align-items: center; margin-bottom: 4px; }
.markrow svg { justify-self: center; color: #666; transform: translateX(6px); }

.canvas { margin-left: 8px; width: 1349px; display: flex; flex-direction: column; gap: 8px; }
.shelf { height: 40px; background: #fafafa; border: 1px solid #d4d4d4; display: flex; align-items: center; flex: none; }
.lab { width: 179px; height: 38px; border-right: 1px solid #d4d4d4; display: flex; align-items: center; gap: 10px; padding-left: 9px; font-size: 18px; color: #333; letter-spacing: .4px; }
.shelf .pill { width: 222px; margin-left: 3px; letter-spacing: .65px; }
.lower { display: flex; gap: 8px; align-items: flex-start; }
.sheet { width: 1109px; height: 715px; background: #fff; border: 1px solid #d4d4d4; padding: 0 8px; }
.sheet h1 { height: 60px; padding: 15px 5px 0; font-size: 31px; line-height: 42px; color: #3c3c3c; letter-spacing: .535px; }
.mapbox { position: relative; width: 1091px; height: 645px; outline: 1px solid #e0e0e0; outline-offset: -1px; }
.boro path { stroke: #6f6a66; stroke-width: 1.200px; vector-effect: non-scaling-stroke; }
.lbl { font: 400 16.500px "Open Sans", sans-serif; }
.lbl.sm { font-size: 14.500px; }
.lbl.lg { font-size: 18px; }
.credit { position: absolute; left: 3px; bottom: 3px; height: 21px; padding: 0 3px; background: rgba(255,255,255,.75); font: 400 16px/21px "Liberation Sans", sans-serif; color: #555; }
.legend { width: 232px; height: 170px; background: #fff; border: 1px solid #d4d4d4; }
.legend h3 { height: 42px; line-height: 43px; padding-left: 9px; background: #fafafa; letter-spacing: .6px; }
.legend p { height: 25px; display: flex; align-items: center; gap: 7px; padding-left: 6px; font-size: 17.500px; line-height: 27px; letter-spacing: .7px; color: #333; }
.legend i { width: 13px; height: 13px; border: 1px solid #666; }
.c1 { background: #f6da84; } .c2 { background: #f7b267; } .c3 { background: #f58b47; } .c4 { background: #d96f4b; } .c5 { background: #b25f50; }

.sheets { height: 46px; border: solid #c6c6c6; border-width: 1px 0; background: #e6e6e6; display: grid; grid-template-columns: 196px 90px 190px 207px 210px 181px 216px 163px 163px 208px 32px 33px 31px; font-size: 18px; line-height: 45px; letter-spacing: .48px; color: #4b4b4b; flex: none; }
.sheets > span { border-right: 1px solid #c6c6c6; padding-left: 8px; display: flex; align-items: center; overflow: hidden; }
.sheets .p { box-shadow: inset 0 -5px #705a81; }
.sheets .ds { gap: 7px; padding-left: 12px; }
.sheets .cut { padding-left: 0; letter-spacing: -.15px; }
.sheets .p svg { margin: 0 6px 0 1px; }
.sheets .cur { background: #fafafa; font-weight: 500; letter-spacing: .63px; line-height: 42px; }
.sheets .add { padding-left: 7px; }

.status { height: 30px; background: #ebebeb; display: grid; grid-template-columns: 84px 154px 1194px 190px 38px 39px 70px 72px 75px; font-size: 16px; line-height: 31px; padding-left: 4px; font-weight: 400; flex: none; }
.sum { letter-spacing: .42px; }
.status i { border-left: 1px solid #c6c6c6; display: flex; align-items: center; padding-left: 9px; }

.taskbar { height: 60px; background: #3c211b; display: flex; flex: none; }
.t { width: 75px; display: grid; place-items: center; padding-bottom: 1px; }
.t:first-child { padding-right: 3px; }
.run { background: linear-gradient(#ffb4a6, #ffb4a6) 50% 100% / 61px 3px no-repeat; }
.live { width: 73px; margin-left: 2px; background: #832e21; border-bottom: 3px solid #ffb4a6; padding: 2px 3px 0 0; }
.tile { width: 33px; height: 33px; background: #f4f6f8; display: grid; place-items: center; }
.let { font: 700 14px "Open Sans", sans-serif; fill: #fff; text-anchor: middle; }
.tray { margin-left: auto; display: flex; align-items: center; color: #fff; padding-right: 6px; }
.spk { margin-left: 16px; }
.clock { width: 108px; margin-left: 3px; display: grid; text-align: center; font: 400 17.500px/28px "Open Sans", sans-serif; letter-spacing: -.1px; }
.note { margin-left: 15px; }
.peek { width: 1px; height: 60px; background: #8a7772; margin-left: 29px; }
```
